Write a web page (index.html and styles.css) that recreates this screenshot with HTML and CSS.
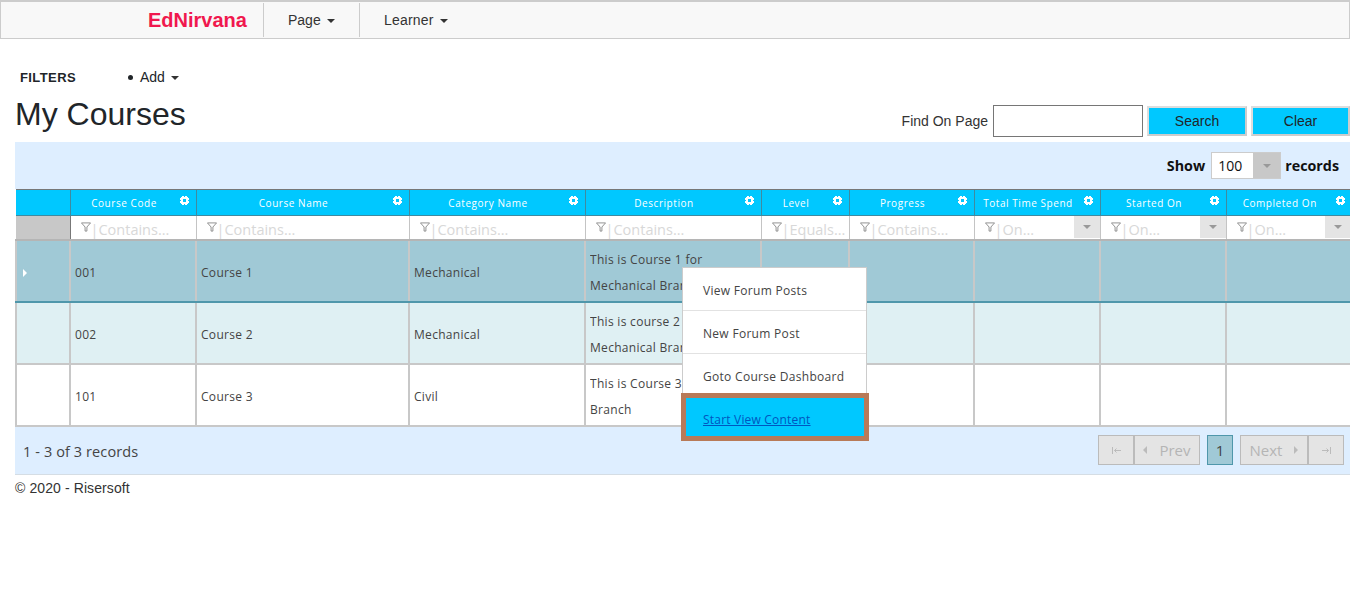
FILE: index.html
```html
<!DOCTYPE html>
<html lang="en">
<head>
    <meta charset="UTF-8">
    <title>My Courses - EdNirvana</title>
    <link rel="stylesheet" href="styles.css">
</head>
<body>
    <!-- Navbar -->
    <nav class="navbar">
        <a class="brand">EdNirvana</a>
        <a class="nav-item nav-page">Page <span class="caret"></span></a>
        <a class="nav-item nav-learner">Learner <span class="caret"></span></a>
    </nav>

    <!-- Filters -->
    <div class="filters">
        <strong class="filters-title">FILTERS</strong>
        <span class="filters-dot"></span>
        <span>Add <span class="caret"></span></span>
    </div>

    <!-- Title and search -->
    <div class="title-row">
        <h1>My Courses</h1>
        <div class="find">
            <label>Find On Page</label>
            <input class="find-input" type="text">
            <button class="find-btn btn-search">Search</button>
            <button class="find-btn btn-clear">Clear</button>
        </div>
    </div>

    <!-- Grid -->
    <div class="grid">
        <div class="grid-toolbar">
            <b>Show</b>
            <div class="size-select">
                <span class="size-value">100</span>
                <span class="size-arrow"><span class="arrow-down"></span></span>
            </div>
            <b>records</b>
        </div>

        <table class="grid-table">
            <colgroup>
                <col class="c0"><col class="c1"><col class="c2"><col class="c3"><col class="c4">
                <col class="c5"><col class="c6"><col class="c7"><col class="c8"><col class="c9">
            </colgroup>
            <thead>
                <tr class="head-row">
                    <th></th>
                    <th>Course Code<svg class="gear"><use href="#gear"/></svg></th>
                    <th>Course Name<svg class="gear"><use href="#gear"/></svg></th>
                    <th>Category Name<svg class="gear"><use href="#gear"/></svg></th>
                    <th>Description<svg class="gear"><use href="#gear"/></svg></th>
                    <th>Level<svg class="gear"><use href="#gear"/></svg></th>
                    <th>Progress<svg class="gear"><use href="#gear"/></svg></th>
                    <th>Total Time Spend<svg class="gear"><use href="#gear"/></svg></th>
                    <th>Started On<svg class="gear"><use href="#gear"/></svg></th>
                    <th>Completed On<svg class="gear"><use href="#gear"/></svg></th>
                </tr>
                <tr class="filter-row">
                    <td class="filter-blank"></td>
                    <td><div class="filter-cell"><svg class="funnel"><use href="#funnel"/></svg><span class="bar">|</span>Contains...</div></td>
                    <td><div class="filter-cell"><svg class="funnel"><use href="#funnel"/></svg><span class="bar">|</span>Contains...</div></td>
                    <td><div class="filter-cell"><svg class="funnel"><use href="#funnel"/></svg><span class="bar">|</span>Contains...</div></td>
                    <td><div class="filter-cell"><svg class="funnel"><use href="#funnel"/></svg><span class="bar">|</span>Contains...</div></td>
                    <td><div class="filter-cell"><svg class="funnel"><use href="#funnel"/></svg><span class="bar">|</span>Equals...</div></td>
                    <td><div class="filter-cell"><svg class="funnel"><use href="#funnel"/></svg><span class="bar">|</span>Contains...</div></td>
                    <td><div class="filter-cell"><svg class="funnel"><use href="#funnel"/></svg><span class="bar">|</span>On...<span class="filter-drop"><span class="arrow-down"></span></span></div></td>
                    <td><div class="filter-cell"><svg class="funnel"><use href="#funnel"/></svg><span class="bar">|</span>On...<span class="filter-drop"><span class="arrow-down"></span></span></div></td>
                    <td><div class="filter-cell"><svg class="funnel"><use href="#funnel"/></svg><span class="bar">|</span>On...<span class="filter-drop"><span class="arrow-down"></span></span></div></td>
                </tr>
            </thead>
            <tbody>
                <tr class="row row-selected">
                    <td><span class="arrow-right"></span></td>
                    <td>001</td><td>Course 1</td><td>Mechanical</td>
                    <td><div class="desc">This is Course 1 for Mechanical Branch</div></td>
                    <td></td><td></td><td></td><td></td><td></td>
                </tr>
                <tr class="row row-alt">
                    <td></td>
                    <td>002</td><td>Course 2</td><td>Mechanical</td>
                    <td><div class="desc">This is course 2 for Mechanical Branch</div></td>
                    <td></td><td></td><td></td><td></td><td></td>
                </tr>
                <tr class="row">
                    <td></td>
                    <td>101</td><td>Course 3</td><td>Civil</td>
                    <td><div class="desc">This is Course 3 for Civil Branch</div></td>
                    <td></td><td></td><td></td><td></td><td></td>
                </tr>
            </tbody>
        </table>

        <div class="grid-footer">
            <span class="record-count">1 - 3 of 3 records</span>
            <div class="pager">
                <span class="pg pg-first"><svg class="pg-end"><use href="#pg-first"/></svg></span>
                <span class="pg pg-prev"><span class="arrow-left"></span>Prev</span>
                <span class="pg-current">1</span>
                <span class="pg pg-next">Next<span class="arrow-next"></span></span>
                <span class="pg pg-last"><svg class="pg-end"><use href="#pg-last"/></svg></span>
            </div>
        </div>

        <!-- Context menu -->
        <ul class="context-menu">
            <li>View Forum Posts</li>
            <li>New Forum Post</li>
            <li>Goto Course Dashboard</li>
            <li class="menu-active"><a>Start View Content</a></li>
        </ul>
    </div>

    <div class="copyright">&copy; 2020 - Risersoft</div>

    <!-- Icons -->
    <svg class="icon-defs">
        <symbol id="gear" viewBox="0 0 9 9">
            <path fill="#fff" fill-rule="evenodd" shape-rendering="crispEdges" d="M2 0h2v1h1V0h2v1h1v1h1v2H8v1h1v2H8v1H7v1H5V8H4v1H2V8H1V7H0V5h1V4H0V2h1V1h1zM3 3v3h3V3z"/>
        </symbol>
        <symbol id="funnel" viewBox="0 0 11 11">
            <path fill="none" stroke="#888" d="M.5 1h10L6.500 5.500v4.500h-2V5.500z"/>
        </symbol>
        <symbol id="pg-first" viewBox="0 0 9 7">
            <path fill="none" stroke="#bbb" d="M.5 0v7M9 3.500H2.500M4.500 1.500l-2 2 2 2"/>
        </symbol>
        <symbol id="pg-last" viewBox="0 0 9 7">
            <path fill="none" stroke="#bbb" d="M8.500 0v7M0 3.500h6.500M4.500 1.500l2 2-2 2"/>
        </symbol>
    </svg>
</body>
</html>
```

FILE: styles.css
```css
/* Basic Reset */
* {
    box-sizing: border-box;
}

body {
    margin: 0;
    background-color: #fff;
    color: #212529;
    font-family: "Liberation Sans", Arial, sans-serif;
    font-size: 14px;
}

/* Navbar */
.navbar {
    display: flex;
    height: 39px;
    padding: 1px 0 0;
    background-color: #f8f8f8;
    border: 1px solid #ccc;
    border-top-width: 2px;
    color: #333;
}

.brand {
    width: 263px;
    padding: 2px 0 0 147px;
    border-right: 1px solid #ccc;
    color: #f0184e;
    font-size: 20px;
    font-weight: bold;
    line-height: 31px;
    margin-bottom: 1px;
}

.nav-item {
    padding: 2px 0 0 24px;
    border-right: 1px solid #ccc;
    line-height: 31px;
    margin-bottom: 1px;
}

.nav-page {
    width: 96px;
}

.nav-learner {
    border-right: 0;
    letter-spacing: 0.2px;
}

.caret {
    display: inline-block;
    margin-left: 2px;
    vertical-align: middle;
    border-top: 4px solid #333;
    border-left: 4px solid transparent;
    border-right: 4px solid transparent;
}

/* Filters */
.filters {
    display: flex;
    align-items: center;
    height: 20px;
    margin-top: 28px;
    padding-left: 20px;
    color: #212529;
}

.filters-title {
    width: 108px;
    font-size: 13px;
    letter-spacing: 0.4px;
}

.filters-dot {
    width: 5px;
    height: 5px;
    margin-right: 7px;
    border-radius: 50%;
    background-color: #212529;
}

/* Title row */
.title-row {
    display: flex;
    justify-content: space-between;
    height: 55px;
    padding-left: 15px;
}

h1 {
    margin: 5px 0 0;
    font-size: 32px;
    font-weight: 500;
    line-height: 44px;
}

.find {
    display: flex;
    align-items: center;
    height: 32px;
    margin-top: 18px;
    color: #333;
}

.find-input {
    width: 150px;
    height: 32px;
    margin-left: 5px;
    border: 1px solid #767676;
    background-color: #fff;
}

.find-btn {
    height: 30px;
    padding: 0;
    border: 2px solid #ddd;
    border-right-color: #ccc;
    border-bottom-color: #ccc;
    background-color: #00c8ff;
    color: #212529;
    font-family: inherit;
    font-size: 14px;
}

.btn-search {
    width: 100px;
    margin-left: 4px;
}

.btn-clear {
    width: 99px;
    margin-left: 4px;
}

/* Grid */
.grid {
    position: relative;
    margin-left: 15px;
    background-color: #deeeff;
    font-family: "Open Sans", "Noto Sans", sans-serif;
    font-size: 12px;
    letter-spacing: 0.3px;
    color: #444;
}

.grid-toolbar {
    display: flex;
    justify-content: flex-end;
    align-items: center;
    gap: 5px;
    height: 47px;
    padding: 0 11px 0 0;
    color: #111;
    font-size: 14.3px;
    letter-spacing: 0;
}

.size-select {
    display: flex;
    width: 70px;
    height: 27px;
    margin: 0 -1px 0 1px;
    border: 1px solid #ccc;
    background-color: #fff;
}

.size-value {
    flex: 1;
    padding-left: 6px;
    font-size: 14px;
    line-height: 26px;
}

.size-arrow {
    display: flex;
    align-items: center;
    justify-content: center;
    width: 27px;
    background-color: #c8c8c8;
}

.arrow-down {
    display: inline-block;
    border-top: 4px solid #999;
    border-left: 4px solid transparent;
    border-right: 4px solid transparent;
}

.grid-table {
    width: 100%;
    table-layout: fixed;
    border-collapse: collapse;
    background-color: #fff;
}

.c0 { width: 54px; }
.c1 { width: 126px; }
.c2 { width: 213px; }
.c3 { width: 176px; }
.c4 { width: 176px; }
.c5 { width: 88px; }
.c6 { width: 125px; }
.c7 { width: 126px; }
.c8 { width: 126px; }
.c9 { width: 125px; }

.head-row th {
    position: relative;
    height: 26px;
    padding: 0 18px 0 0;
    background-color: #00c8ff;
    border-top: 1px solid #777;
    border-left: 1px solid #3f8aa0;
    border-bottom: 1px solid #3f8aa0;
    color: #fff;
    font-size: 10px;
    font-weight: normal;
    letter-spacing: 0.55px;
    text-align: center;
}

.head-row th:first-child {
    border-left: 0;
}

.gear {
    position: absolute;
    top: 6px;
    right: 6.5px;
    width: 9px;
    height: 9px;
}

.filter-row td {
    height: 24px;
    padding: 0;
    border-left: 1px solid #c4c4c4;
    border-bottom: 2px solid #b5b5b5;
    overflow: hidden;
}

.filter-row .filter-blank {
    background-color: #c8c8c8;
    border-left: 0;
    border-right: 1px solid #777;
}

.filter-cell {
    display: flex;
    align-items: center;
    height: 22px;
    padding: 5px 0 0 10px;
    color: #d8d8d8;
    font-size: 14.5px;
    letter-spacing: 0;
    white-space: nowrap;
}

.funnel {
    width: 10px;
    height: 10px;
    margin-bottom: 5px;
    flex-shrink: 0;
}

.filter-drop {
    display: flex;
    align-items: center;
    justify-content: center;
    align-self: stretch;
    width: 26px;
    margin: -5px 0 0 auto;
    background-color: #e4e4e4;
}

.row td {
    height: 62px;
    padding: 4px 4px 0;
    border-left: 2px solid #c8c8c8;
    border-bottom: 2px solid #c8c8c8;
    line-height: 26px;
    vertical-align: middle;
}

.row-selected td {
    background-color: #a0c9d6;
    border-bottom-color: #4f97ab;
}

.row-alt td {
    background-color: #dff0f3;
}

.row td:first-child {
    padding-left: 6px;
}

.desc {
    overflow: hidden;
}

.arrow-right {
    display: inline-block;
    border-left: 4px solid #fff;
    border-top: 4px solid transparent;
    border-bottom: 4px solid transparent;
}

/* Grid footer */
.grid-footer {
    display: flex;
    justify-content: space-between;
    align-items: center;
    height: 48px;
    padding: 0 6px 0 8px;
    border-bottom: 1px solid #d5dde4;
    font-size: 14px;
}

.record-count {
    padding-top: 2px;
    font-size: 14.5px;
    letter-spacing: 0.1px;
}

.pager {
    display: flex;
    align-items: center;
    height: 30px;
    margin-bottom: 1px;
    color: #b5b5b5;
    font-size: 15px;
    letter-spacing: 0;
}

.pg {
    display: flex;
    align-items: center;
    justify-content: center;
    height: 30px;
    padding-top: 1px;
    border: 1px solid #bbb;
    background-color: #e4e4e4;
}

.pg-first,
.pg-last {
    width: 36px;
}

.pg-prev {
    width: 66px;
}

.pg-next {
    width: 68px;
}

.pg-current {
    width: 26px;
    height: 30px;
    margin: 0 7px;
    border: 1px solid #4f97ab;
    background-color: #a0c9d6;
    color: #444;
    text-align: center;
    line-height: 28px;
}

.pg-end {
    width: 9px;
    height: 7px;
}

.arrow-left {
    margin-right: 12px;
    border-right: 4px solid #bbb;
    border-top: 4px solid transparent;
    border-bottom: 4px solid transparent;
}

.arrow-next {
    margin-left: 12px;
    border-left: 4px solid #bbb;
    border-top: 4px solid transparent;
    border-bottom: 4px solid transparent;
}

/* Context menu */
.context-menu {
    position: absolute;
    top: 125px;
    left: 667px;
    width: 185px;
    margin: 0;
    padding: 0;
    list-style: none;
    background-color: #fff;
    border: 1px solid #ccc;
    color: #444;
}

.context-menu li {
    height: 43px;
    padding: 1px 0 0 20px;
    border-bottom: 1px solid #e2e2e2;
    line-height: 43px;
}

.context-menu .menu-active {
    height: 48px;
    margin: -4px -3px -2px -2px;
    padding: 0 0 0 17px;
    border: 5px solid #b87a58;
    background-color: #00c8ff;
    line-height: 44px;
    color: #0056c0;
    letter-spacing: 0.2px;
    text-decoration: underline;
}

.copyright {
    margin-top: 5px;
    padding-left: 15px;
    color: #333;
    font-size: 14px;
    letter-spacing: 0.1px;
}

.icon-defs {
    display: none;
}
```
